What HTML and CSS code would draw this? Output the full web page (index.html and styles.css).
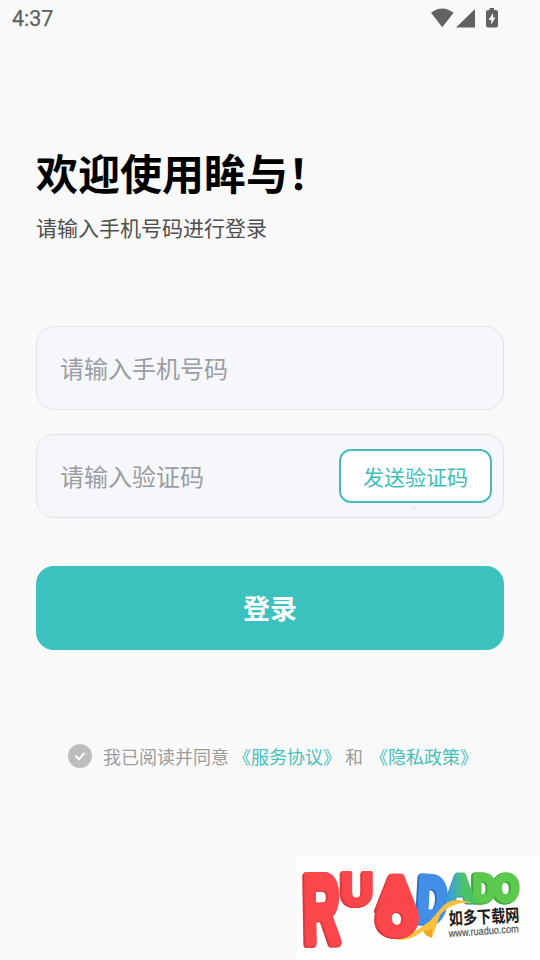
FILE: index.html
```html
<!DOCTYPE html>
<html lang="zh-CN">
<head>
<meta charset="utf-8">
<title>登录</title>
<link rel="stylesheet" href="styles.css">
</head>
<body>
<header class="status">
  <span class="clock">4:37</span>
  <svg class="status-icons" width="70" height="22" viewBox="0 0 70 22">
    <path d="M1 6.500Q12.300-2 23.600 6.500L12.300 21Z" transform="translate(0 -.8)"/>
    <path d="M45 2V20.500H26Z"/>
    <path fill-rule="evenodd" d="M59.500 1H64V3H66Q68 3 68 5V18.500Q68 20.500 66 20.500H58Q56 20.500 56 18.500V5Q56 3 58 3H59.500ZM63 6L58.500 13H61.200V17.500L65.500 10.500H63Z"/>
  </svg>
</header>
<main class="page">
  <h1 class="title">欢迎使用眸与！</h1>
  <p class="subtitle">请输入手机号码进行登录</p>
  <form class="form">
    <div class="field"><span class="hint">请输入手机号码</span></div>
    <div class="field code"><span class="hint">请输入验证码</span><button class="send" type="button">发送验证码</button></div>
    <button class="login" type="button">登录</button>
  </form>
  <div class="agreement">
    <svg class="check" width="26" height="26" viewBox="0 0 26 26"><circle cx="13" cy="13" r="12"/><path d="M8.500 12.700L12 16.300L17.500 9.800"/></svg>
    <span class="agree">我已阅读并同意</span><a class="link terms">《服务协议》</a><span class="and">和</span><a class="link privacy">《隐私政策》</a>
  </div>
</main>
<div class="watermark">
  <svg width="243" height="104" viewBox="297 856 243 104">
    <defs>
      <linearGradient id="teal-green" x1="0" x2="1"><stop offset=".1" stop-color="#3b9edf"/><stop offset=".6" stop-color="#4bc36a"/></linearGradient>
    </defs>
    <g class="letter blue"><text transform="translate(417 920) rotate(3) scale(.40 .62)">D</text></g>
    <g class="letter green"><text transform="translate(494 901) scale(.32 .37)">O</text></g>
    <g class="letter green"><text transform="translate(473 901) scale(.31 .37)">D</text></g>
    <g class="letter mixed"><text transform="translate(447 901) scale(.37 .37)">A</text></g>
    <path class="ribbon" d="M396 940Q410 935 420 928Q426 924 430 921Q437 913 443 906Q449 900 457 900Q466 900 472 903Q461 902 455 905Q447 907 440 915L432 938L426 935L423 931Q411 941 396 940Z"/>
    <path class="ribbon-fold" d="M423 931L432 929L432 938L426 935Z"/>
    <g class="letter red leg"><text transform="translate(304 943) rotate(-1) scale(.51 .97)">R</text></g>
    <g class="letter red arch"><text transform="translate(341 905) scale(.45 .465)">U</text></g>
    <g class="letter red"><text transform="translate(378 910) scale(.52 .49)">A</text></g>
    <g class="letter red drop"><text transform="translate(378.500 934) scale(.49 .45)">O</text></g>
    <text class="site" transform="translate(449 925) rotate(-3) scale(.81 1)">如多下载网</text>
    <text class="url" transform="translate(449 937) rotate(-4)" textLength="70" lengthAdjust="spacingAndGlyphs">www.ruaduo.com</text>
  </svg>
</div>
</body>
</html>
```

FILE: styles.css
```css
* { box-sizing: border-box; }
body {
  margin: 0;
  width: 540px;
  height: 960px;
  overflow: hidden;
  position: relative;
  background: #f9f9f9;
  font-family: "Noto Sans CJK SC", sans-serif;
}
.status {
  height: 38px;
  padding: 0 40px 0 12px;
  display: flex;
  justify-content: space-between;
  align-items: center;
  color: #626262;
}
.clock { font: 400 21.500px/38px Roboto, sans-serif; -webkit-text-stroke: .25px #626262; }
.status-icons { fill: #626262; margin-top: -2px; }
.page { padding: 103px 36px 0; }
.title {
  margin: 0;
  font-size: 42px;
  line-height: 62px;
  font-weight: 700;
  color: #000;
  white-space: nowrap;
}
.subtitle {
  margin: 8px 0 0;
  font-size: 21px;
  line-height: 32px;
  font-weight: 400;
  color: #4f4f4f;
}
.form {
  margin-top: 83px;
  display: flex;
  flex-direction: column;
  gap: 24px;
}
.field {
  height: 84px;
  border: 1px solid #dfe2e5;
  border-radius: 18px;
  background: #f5f7fb;
  padding: 0 11px 0 23px;
  display: flex;
  align-items: center;
  justify-content: space-between;
}
.code { position: relative; }
.code::after {
  content: "";
  position: absolute;
  left: 377px;
  top: 73px;
  width: 1px;
  height: 1px;
  background: #8f9a70;
}
.hint { font-size: 24px; line-height: 36px; color: #9b9da0; }
.send {
  width: 153px;
  height: 54px;
  padding: 0;
  border: 2px solid #4abab7;
  border-radius: 12px;
  background: #fff;
  color: #42bdba;
  font: 400 21px/32px "Noto Sans CJK SC", sans-serif;
}
.login {
  height: 84px;
  margin-top: 24px;
  padding: 0;
  border: 0;
  border-radius: 18px;
  background: #3bc1be;
  color: #fff;
  font: 700 27px/40px "Noto Sans CJK SC", sans-serif;
}
.agreement {
  margin: 91px 0 0 31px;
  height: 30px;
  display: flex;
  align-items: center;
  font-size: 18px;
  line-height: 30px;
  white-space: nowrap;
  color: #9c9c9c;
}
.check { fill: #bdbdbd; }
.check path { fill: none; stroke: #fff; stroke-width: 2; }
.agree { margin-left: 10px; }
.link { color: #45c1bc; }
.terms { margin-left: 4px; }
.and { margin-left: 4px; }
.privacy { margin-left: 7px; }
.watermark {
  position: absolute;
  right: 0;
  bottom: 0;
  width: 243px;
  height: 104px;
  background: #fefefd;
}
.watermark svg { display: block; }
.letter {
  font: 700 100px "Liberation Sans", sans-serif;
  stroke-width: 13px;
  stroke-linejoin: round;
}
.leg { stroke-width: 8px; }
.arch { stroke-width: 9px; }
.drop { stroke-width: 18px; }
.red { fill: #fb474b; stroke: #fb474b; filter: drop-shadow(-1px 0 0 #d63b41) drop-shadow(-1px 1px 0 #d63b41); }
.blue { fill: #438fe8; stroke: #438fe8; filter: drop-shadow(-1px 0 0 #2f6fc0) drop-shadow(-1px 1px 0 #2f6fc0); }
.green { fill: #5ac94e; stroke: #5ac94e; filter: drop-shadow(-1px 0 0 #3ea43b) drop-shadow(-1px 1px 0 #3ea43b); }
.mixed { fill: url(#teal-green); stroke: url(#teal-green); filter: drop-shadow(-1px 1px 0 #338fae); }
.ribbon { fill: #fdc23b; }
.ribbon-fold { fill: #f0a51f; }
.site { font: 700 17.500px "Noto Sans CJK SC", sans-serif; fill: #1b1b1b; }
.url { font: 400 10.500px "Liberation Sans", sans-serif; fill: #555; stroke: #555; stroke-width: .2px; }
```
